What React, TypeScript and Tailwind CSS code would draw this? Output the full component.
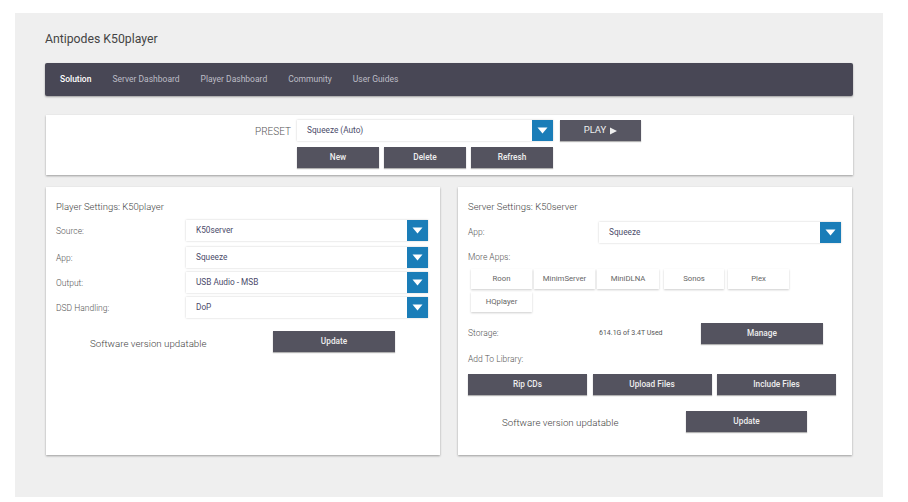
import React from 'react'

const navItems = ['Solution', 'Server Dashboard', 'Player Dashboard', 'Community', 'User Guides']
const apps = [
  { name: 'Roon', width: 'w-[61px]', margin: 'mr-[2px]' },
  { name: 'MinimServer', width: 'w-[61px]', margin: 'mr-[2px]' },
  { name: 'MiniDLNA', width: 'w-[62px]', margin: 'mr-[5px]' },
  { name: 'Sonos', width: 'w-[60px]', margin: 'mr-[4px]' },
  { name: 'Plex', width: 'w-[61px]', margin: '' },
  { name: 'HQplayer', width: 'w-[61px]', margin: '' },
]

function Select({ value, className = '' }: { value: string; className?: string }) {
  return (
    <div className={`flex h-[21px] items-stretch bg-white shadow-[0_0_2px_rgba(0,0,0,0.2)] ${className}`}>
      <span className="flex flex-1 items-center pl-[10px] text-[8.25px] text-[#4b4b6a]">{value}</span>
      <span className="flex w-[21px] items-center justify-center bg-[#1a7db8]">
        <svg width="11" height="7" viewBox="0 0 11 7">
          <path d="M0.5 0.5h10L5.5 6.5z" fill="#fff" />
        </svg>
      </span>
    </div>
  )
}

function DarkButton({ label, className = '' }: { label: string; className?: string }) {
  return (
    <button className={`flex h-[21px] items-center justify-center bg-[#54535f] text-[8.25px] font-medium text-[#eeeeee] shadow-[0_1px_1px_rgba(0,0,0,0.3)] ${className}`}>
      {label}
    </button>
  )
}

function Row({ label, value, className = '' }: { label: string; value: string; className?: string }) {
  return (
    <div className={`flex items-center ${className}`}>
      <span className="w-[130px] pt-px text-[8.5px] font-light text-[#555]">{label}</span>
      <Select value={value} className="w-[242px]" />
    </div>
  )
}

export default function App() {
  return (
    <div className="h-[502px] w-[908px] overflow-hidden bg-white pl-[15px] pt-[13px] font-['Roboto',sans-serif]">
      <div className="h-[484px] w-[868px] bg-[#efefef] pl-[30px] pr-[30px]">
        <h1 className="pt-[19px] text-[12.25px] leading-[15px] text-[#444]">Antipodes K50player</h1>

        <nav className="mt-[16px] flex h-[33px] items-center gap-[21px] rounded-[2px] bg-[#484755] pl-[15px] text-[8.5px] text-[#bdbdc6] shadow-[0_1px_2px_rgba(0,0,0,0.35)]">
          {navItems.map((item, i) => (
            <span key={item} className={i === 0 ? 'font-medium text-white' : ''}>{item}</span>
          ))}
        </nav>

        <section className="ml-px mt-[19px] h-[60px] bg-white pt-[5px] shadow-[0_1px_2px_rgba(0,0,0,0.35)]">
          <div className="flex items-center">
            <span className="w-[251px] pr-[6px] pt-px text-right text-[10px] font-light text-[#555]">PRESET</span>
            <Select value="Squeeze (Auto)" className="w-[256px]" />
            <button className="ml-[7px] flex h-[21px] w-[81px] items-center justify-center gap-[4px] bg-[#575662] text-[9.5px] text-[#eee] shadow-[0_1px_1px_rgba(0,0,0,0.3)]">
              PLAY
              <svg width="7" height="8" viewBox="0 0 7 8"><path d="M0 0.5L7 4L0 7.5z" fill="#eee" /></svg>
            </button>
          </div>
          <div className="ml-[251px] mt-[6px] flex gap-[5px]">
            <DarkButton label="New" className="h-[20px] w-[82px]" />
            <DarkButton label="Delete" className="h-[20px] w-[82px]" />
            <DarkButton label="Refresh" className="h-[20px] w-[82px]" />
          </div>
        </section>

        <div className="ml-px mt-[12px] flex gap-[18px]">
          <section className="h-[268px] w-[394px] bg-white pl-[10px] pt-[14px] shadow-[0_1px_2px_rgba(0,0,0,0.35)]">
            <h2 className="text-[9.5px] font-light leading-[12px] text-[#444]">Player Settings: K50player</h2>
            <Row label="Source:" value="K50server" className="mt-[7px]" />
            <Row label="App:" value="Squeeze" className="mt-[6px]" />
            <Row label="Output:" value="USB Audio - MSB" className="mt-[4px]" />
            <Row label="DSD Handling:" value="DoP" className="mt-[4px]" />
            <div className="mt-[13px] flex items-center pl-[34px]">
              <span className="mt-[6px] w-[183px] text-[9.75px] font-light text-[#444]">Software version updatable</span>
              <DarkButton label="Update" className="w-[122px]" />
            </div>
          </section>

          <section className="h-[268px] w-[394px] bg-white pl-[10px] pt-[14px] shadow-[0_1px_2px_rgba(0,0,0,0.35)]">
            <h2 className="text-[9.5px] font-light leading-[12px] text-[#444]">Server Settings: K50server</h2>
            <div className="mt-[9px] flex items-center">
              <span className="w-[131px] text-[8.5px] font-light text-[#555]">App:</span>
              <Select value="Squeeze" className="w-[242px]" />
            </div>
            <p className="mt-[9px] text-[8.5px] font-light leading-[11px] text-[#555]">More Apps:</p>
            <div className="ml-[3px] mt-[6px] flex w-[330px] flex-wrap gap-y-[3px]">
              {apps.map(app => (
                <span key={app.name} className={`flex h-[20px] items-center justify-center bg-white text-[7.75px] text-[#666] shadow-[0_1px_2px_rgba(0,0,0,0.2)] ${app.width} ${app.margin}`}>
                  {app.name}
                </span>
              ))}
            </div>
            <div className="mt-[11px] flex items-center">
              <span className="w-[131px] text-[8.5px] font-light text-[#555]">Storage:</span>
              <span className="w-[102px] text-[7px] text-[#555]">614.1G of 3.4T Used</span>
              <DarkButton label="Manage" className="h-[20px] w-[122px]" />
            </div>
            <p className="mt-[10px] text-[8.5px] font-light leading-[11px] text-[#555]">Add To Library:</p>
            <div className="mt-[9px] flex gap-[5.5px]">
              <DarkButton label="Rip CDs" className="h-[20px] w-[119px]" />
              <DarkButton label="Upload Files" className="h-[20px] w-[119px]" />
              <DarkButton label="Include Files" className="h-[20px] w-[119px]" />
            </div>
            <div className="mt-[16px] flex items-center pl-[34px]">
              <span className="mt-[4px] w-[184px] text-[9.75px] font-light text-[#444]">Software version updatable</span>
              <DarkButton label="Update" className="w-[121px]" />
            </div>
          </section>
        </div>
      </div>
    </div>
  )
}
